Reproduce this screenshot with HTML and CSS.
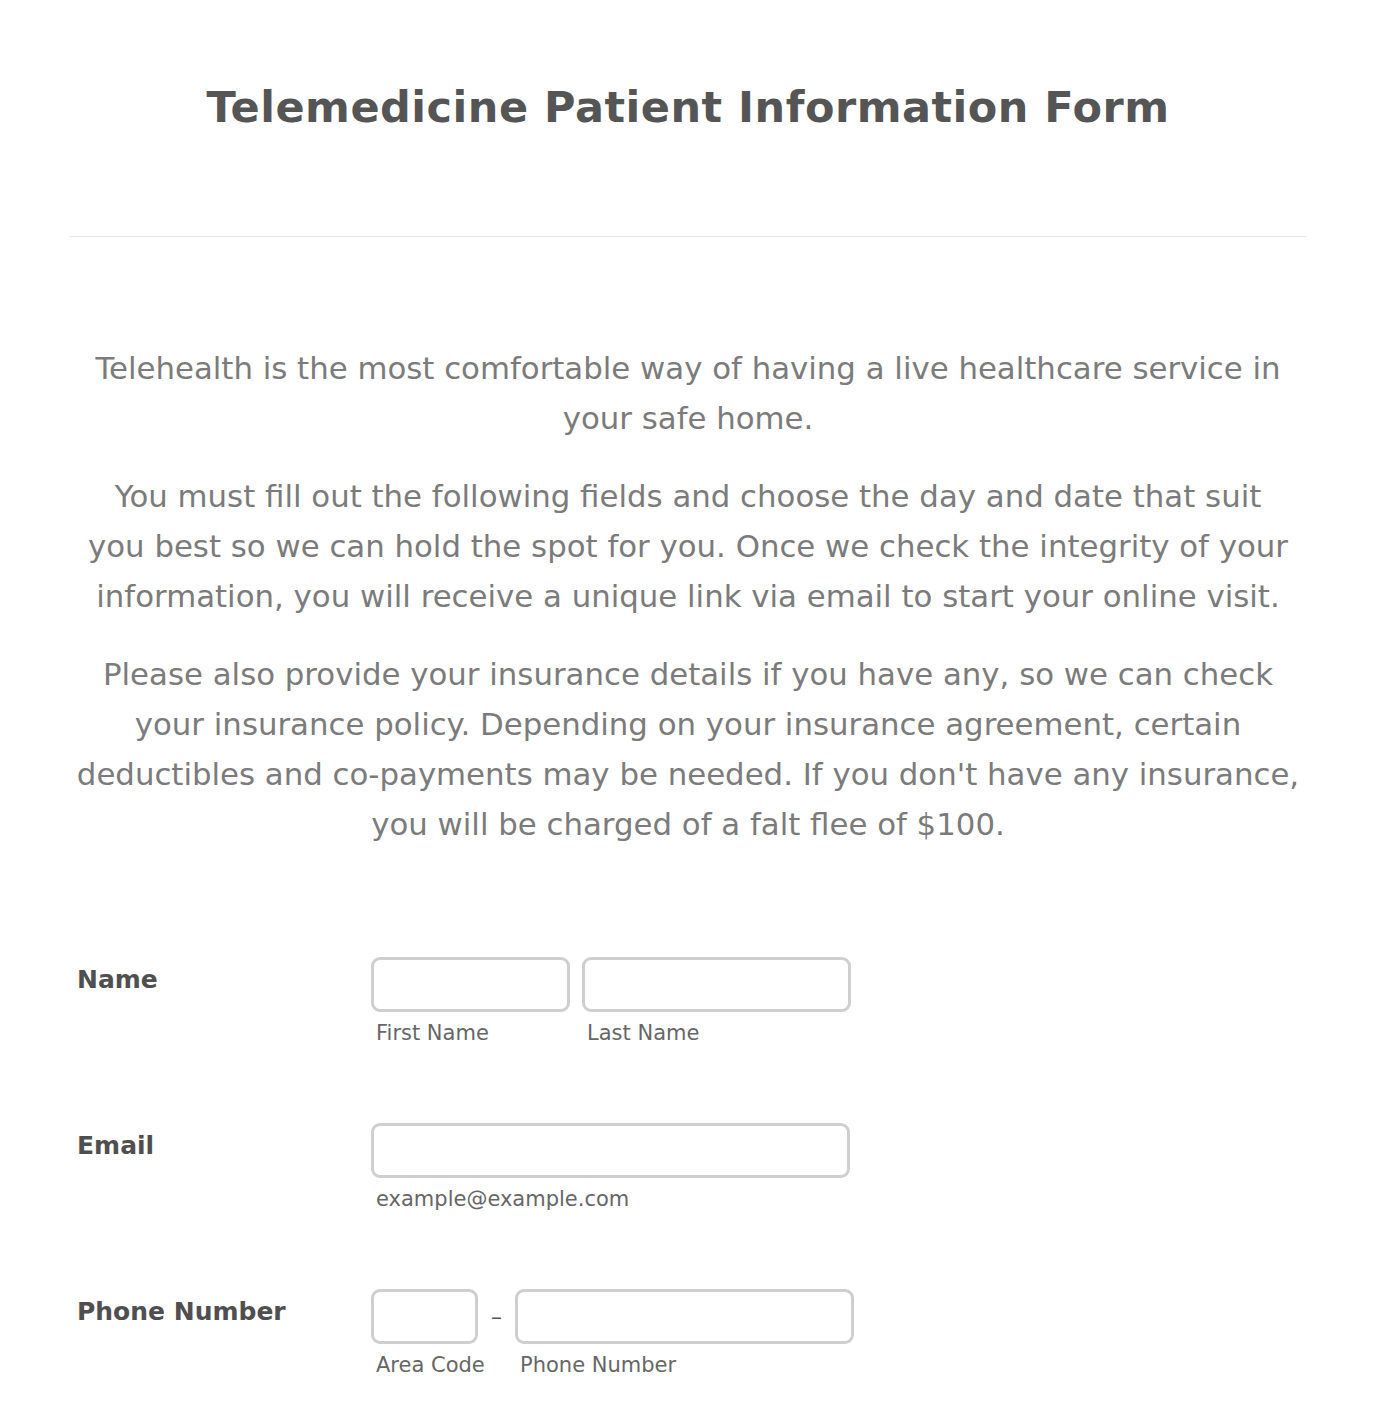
FILE: index.html
```html
<!DOCTYPE html>
<html>
<head>
<meta charset="utf-8">
<link rel="stylesheet" href="styles.css">
</head>
<body>
<div class="page">
  <header class="head">
    <h1 class="title">Telemedicine Patient Information Form</h1>
  </header>
  <div class="intro">
    <p>Telehealth is the most comfortable way of having a live healthcare service in your safe home.</p>
    <p class="narrow">You must fill out the following fields and choose the day and date that suit you best so we can hold the spot for you. Once we check the integrity of your information, you will receive a unique link via email to start your online visit.</p>
    <p>Please also provide your insurance details if you have any, so we can check your insurance policy. Depending on your insurance agreement, certain deductibles and co&#8209;payments may be needed. If you don't have any insurance, you will be charged of a falt flee of $100.</p>
  </div>
  <div class="form">
    <div class="row">
      <div class="label">Name</div>
      <div class="fields">
        <div class="field w198"><input class="box" type="text"><span class="sub">First Name</span></div>
        <div class="field w268"><input class="box" type="text"><span class="sub">Last Name</span></div>
      </div>
    </div>
    <div class="row">
      <div class="label">Email</div>
      <div class="fields">
        <div class="field w478"><input class="box" type="text"><span class="sub">example@example.com</span></div>
      </div>
    </div>
    <div class="row">
      <div class="label">Phone Number</div>
      <div class="fields phone">
        <div class="field w106"><input class="box" type="text"><span class="sub">Area Code</span></div>
        <span class="dash">–</span>
        <div class="field w338"><input class="box" type="text"><span class="sub">Phone Number</span></div>
      </div>
    </div>
  </div>
</div>
</body>
</html>
```
FILE: styles.css
```css
html, body {
  margin: 0;
  padding: 0;
  background: #fff;
}
body {
  font-family: "DejaVu Sans", "Lucida Grande", sans-serif;
}
.page {
  padding: 0 68px 0 70px;
}
.head {
  border-bottom: 1px solid #e6e6e6;
  padding-top: 78px;
  height: 80px;
  padding-bottom: 78px;
}
.title {
  margin: 0;
  text-align: center;
  font-size: 43px;
  line-height: 58px;
  font-weight: bold;
  color: #555;
  letter-spacing: 0.5px;
}
.intro {
  padding: 106px 0 0 0;
  text-align: center;
  color: #7b7b7b;
  font-size: 30.8px;
  line-height: 50px;
}
.intro p {
  margin: 0 0 28px 0;
}
.intro .narrow {
  padding: 0 15px;
}
.form {
  padding: 80px 0 0 7px;
}
.row {
  display: flex;
  height: 166px;
}
.label {
  width: 294px;
  font-size: 25px;
  font-weight: bold;
  color: #4f4f4f;
  padding-top: 8px;
  line-height: 30px;
}
.fields {
  display: flex;
  gap: 12px;
  align-items: flex-start;
}
.phone {
  gap: 0;
}
.field {
  display: flex;
  flex-direction: column;
}
.box {
  box-sizing: border-box;
  width: 100%;
  height: 55px;
  border: 3px solid #cfcfcf;
  border-radius: 9px;
  background: #fff;
  margin: 0;
  padding: 0;
  outline: none;
}
.w198 { width: 199px; }
.w268 { width: 269px; }
.w478 { width: 479px; }
.w106 { width: 107px; }
.w338 { width: 339px; }
.sub {
  font-size: 21px;
  line-height: 30px;
  color: #666;
  padding: 6px 0 0 5px;
  white-space: nowrap;
}
.dash {
  width: 37px;
  text-align: center;
  font-size: 22px;
  color: #555;
  line-height: 55px;
}
```
